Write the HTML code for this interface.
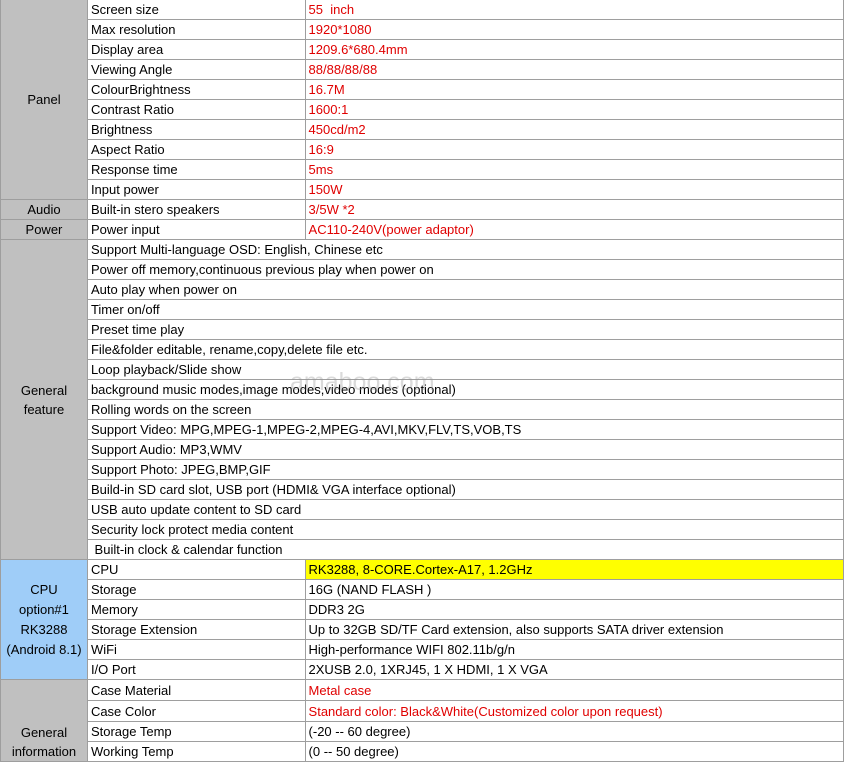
<!DOCTYPE html><html><head><style>
body{margin:0;background:#fff;width:844px;height:763px;overflow:hidden;position:relative;font-family:"Liberation Sans",sans-serif;font-size:13px;}
table{border-collapse:collapse;table-layout:fixed;position:absolute;left:0;top:-1px;}
td{border:1px solid #9e9e9e;height:19px;padding:0 0 0 3px;white-space:nowrap;overflow:hidden;line-height:19px;color:#000}
td.g{background:#c0c0c0;text-align:center;padding:0;line-height:19px}
td.b{background:#9fcdf8;text-align:center;padding:0;line-height:20px}
.m{line-height:20px}
.r{color:#e00000}
.y{background:#ffff00}
.wm{position:absolute;left:290px;top:368px;font-size:25px;color:rgba(150,150,150,.35)}
</style></head><body>
<table>
<col style="width:87px"><col style="width:218px"><col style="width:539px">
<tr><td class="g" rowspan="10">Panel</td><td>Screen size</td><td class="r">55&nbsp; inch</td></tr>
<tr><td>Max resolution</td><td class="r">1920*1080</td></tr>
<tr><td>Display area</td><td class="r">1209.6*680.4mm</td></tr>
<tr><td>Viewing Angle</td><td class="r">88/88/88/88</td></tr>
<tr><td>ColourBrightness</td><td class="r">16.7M</td></tr>
<tr><td>Contrast Ratio</td><td class="r">1600:1</td></tr>
<tr><td>Brightness</td><td class="r">450cd/m2</td></tr>
<tr><td>Aspect Ratio</td><td class="r">16:9</td></tr>
<tr><td>Response time</td><td class="r">5ms</td></tr>
<tr><td>Input power</td><td class="r">150W</td></tr>
<tr><td class="g">Audio</td><td>Built-in stero speakers</td><td class="r">3/5W *2</td></tr>
<tr><td class="g">Power</td><td>Power input</td><td class="r">AC110-240V(power adaptor)</td></tr>
<tr><td class="g m" rowspan="16">General<br>feature</td><td colspan="2">Support Multi-language OSD: English, Chinese etc</td></tr>
<tr><td colspan="2">Power off memory,continuous previous play when power on</td></tr>
<tr><td colspan="2">Auto play when power on</td></tr>
<tr><td colspan="2">Timer on/off</td></tr>
<tr><td colspan="2">Preset time play</td></tr>
<tr><td colspan="2">File&amp;folder editable, rename,copy,delete file etc.</td></tr>
<tr><td colspan="2">Loop playback/Slide show</td></tr>
<tr><td colspan="2">background music modes,image modes,video modes (optional)</td></tr>
<tr><td colspan="2">Rolling words on the screen</td></tr>
<tr><td colspan="2">Support Video: MPG,MPEG-1,MPEG-2,MPEG-4,AVI,MKV,FLV,TS,VOB,TS</td></tr>
<tr><td colspan="2">Support Audio: MP3,WMV</td></tr>
<tr><td colspan="2">Support Photo: JPEG,BMP,GIF</td></tr>
<tr><td colspan="2">Build-in SD card slot, USB port (HDMI&amp; VGA interface optional)</td></tr>
<tr><td colspan="2">USB auto update content to SD card</td></tr>
<tr><td colspan="2">Security lock protect media content</td></tr>
<tr><td colspan="2">&nbsp;Built-in clock &amp; calendar function</td></tr>
<tr><td class="b" rowspan="6">CPU<br>option#1<br>RK3288<br>(Android 8.1)</td><td>CPU</td><td class="y">RK3288, 8-CORE.Cortex-A17, 1.2GHz</td></tr>
<tr><td>Storage</td><td>16G (NAND FLASH )</td></tr>
<tr><td>Memory</td><td>DDR3 2G</td></tr>
<tr><td>Storage Extension</td><td>Up to 32GB SD/TF Card extension, also supports SATA driver extension</td></tr>
<tr><td>WiFi</td><td>High-performance WIFI 802.11b/g/n</td></tr>
<tr><td>I/O Port</td><td>2XUSB 2.0, 1XRJ45, 1 X HDMI, 1 X VGA</td></tr>
<tr><td class="g m" rowspan="4" style="vertical-align:bottom">General<br>information</td><td style="height:20px">Case Material</td><td class="r">Metal case</td></tr>
<tr><td style="height:20px">Case Color</td><td class="r">Standard color: Black&amp;White(Customized color upon request)</td></tr>
<tr><td>Storage Temp</td><td>(-20 -- 60 degree)</td></tr>
<tr><td>Working Temp</td><td>(0 -- 50 degree)</td></tr>
</table>
<div class="wm">amaboo.com</div>
</body></html>
